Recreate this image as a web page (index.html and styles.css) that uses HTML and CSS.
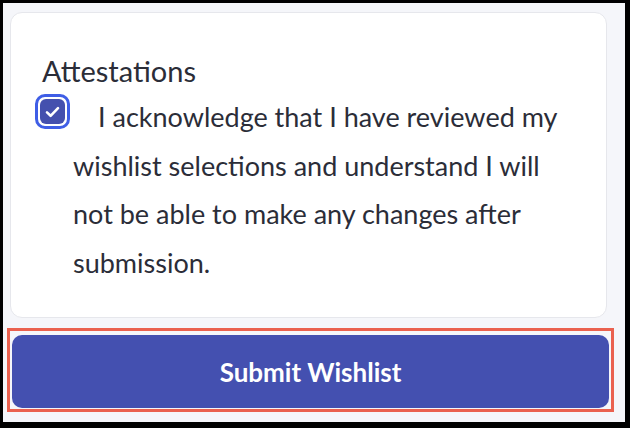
FILE: index.html
```html
<!DOCTYPE html>
<html>
<head>
<meta charset="utf-8">
<link rel="stylesheet" href="styles.css">
</head>
<body>
<div class="frame">
  <div class="card">
    <div class="title">Attestations</div>
    <div class="attest">
      <span class="check">
        <span class="box">
          <svg width="15" height="12" viewBox="0 0 15 12"><path d="M2 6.4 L5.6 9.8 L13 2.2" fill="none" stroke="#fff" stroke-width="2.6" stroke-linecap="round" stroke-linejoin="round"/></svg>
        </span>
      </span>
      <p class="label">I acknowledge that I have reviewed my wishlist selections and understand I will not be able to make any changes after submission.</p>
    </div>
  </div>
  <div class="highlight">
    <button class="submit">Submit Wishlist</button>
  </div>
</div>
</body>
</html>
```

FILE: styles.css
```css
html, body {
  margin: 0;
  padding: 0;
  background: #000;
}
body {
  width: 630px;
  height: 428px;
  padding: 3px 5px 6px 3px;
  box-sizing: border-box;
  font-family: Lato, "Noto Sans", sans-serif;
  color: #2b2d38;
}
.frame {
  background: #f5f6fa;
  height: 100%;
  padding: 9px 0 0 2px;
  box-sizing: border-box;
}
.card {
  margin-left: 5px;
  width: 597px;
  height: 306px;
  box-sizing: border-box;
  background: #fff;
  border: 1px solid #e6e7ec;
  border-radius: 12px;
  padding: 38px 30px 0 24px;
}
.title {
  font-size: 29px;
  line-height: 40px;
  margin-left: 7px;
}
.attest {
  display: flex;
  align-items: flex-start;
  margin-top: 3px;
}
.check {
  flex: none;
  width: 35px;
  height: 35px;
  box-sizing: border-box;
  border: 3px solid #3f5ee6;
  border-radius: 10px;
  padding: 2px;
}
.box {
  display: flex;
  align-items: center;
  justify-content: center;
  width: 100%;
  height: 100%;
  background: #4450ae;
  border-radius: 6px;
}
.label {
  margin: -1px 0 0 3px;
  width: 495px;
  font-size: 27px;
  line-height: 48.5px;
  text-indent: 25px;
}
.highlight {
  margin: 10px 0 0 2px;
  width: 607px;
  height: 84px;
  box-sizing: border-box;
  border: 3px solid #ea614f;
  padding: 4px 2px 1px 2px;
}
.submit {
  display: block;
  width: 597px;
  height: 73px;
  border: none;
  border-radius: 10px;
  background: #4450b0;
  color: #fff;
  font-family: Lato, "Noto Sans", sans-serif;
  font-weight: 700;
  font-size: 26px;
  padding: 0;
}
```
